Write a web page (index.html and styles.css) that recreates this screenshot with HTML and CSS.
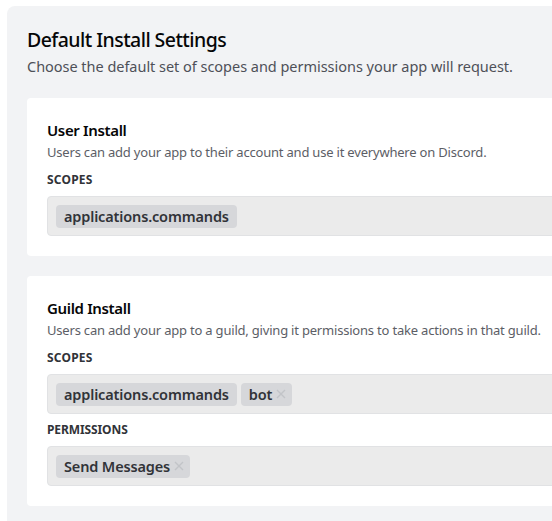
FILE: index.html
```html
<!DOCTYPE html>
<html>
<head>
<meta charset="utf-8">
<link rel="stylesheet" href="styles.css">
</head>
<body>
<div class="panel">
  <h2 class="title">Default Install Settings</h2>
  <p class="subtitle">Choose the default set of scopes and permissions your app will request.</p>

  <section class="card">
    <h3 class="card-title">User Install</h3>
    <p class="card-desc">Users can add your app to their account and use it everywhere on Discord.</p>
    <div class="label">SCOPES</div>
    <div class="select">
      <span class="chip">applications.commands</span>
    </div>
  </section>

  <section class="card">
    <h3 class="card-title">Guild Install</h3>
    <p class="card-desc">Users can add your app to a guild, giving it permissions to take actions in that guild.</p>
    <div class="label">SCOPES</div>
    <div class="select">
      <span class="chip">applications.commands</span>
      <span class="chip">bot<svg class="x" viewBox="0 0 12 12" width="12" height="12"><path d="M2 2 L10 10 M10 2 L2 10" stroke="currentColor" stroke-width="1.4" fill="none"/></svg></span>
    </div>
    <div class="label label-gap">PERMISSIONS</div>
    <div class="select">
      <span class="chip">Send Messages<svg class="x" viewBox="0 0 12 12" width="12" height="12"><path d="M2 2 L10 10 M10 2 L2 10" stroke="currentColor" stroke-width="1.4" fill="none"/></svg></span>
    </div>
  </section>
</div>
</body>
</html>
```

FILE: styles.css
```css
html, body {
  margin: 0;
  padding: 0;
  background: #ffffff;
  overflow: hidden;
}
body {
  width: 552px;
  height: 521px;
  font-family: "Noto Sans", "Open Sans", sans-serif;
  color: #313338;
}
.panel {
  margin: 6px 0 0 7px;
  width: 680px;
  background: #f2f3f5;
  border-radius: 8px;
  padding: 22px 20px 30px 20px;
  box-sizing: border-box;
}
.title {
  margin: 0;
  font-size: 19.5px;
  line-height: 24px;
  font-weight: 500;
  letter-spacing: -0.55px;
  color: #060607;
}
.subtitle {
  margin: 4px 0 0 0;
  font-size: 14.5px;
  line-height: 20px;
  letter-spacing: -0.03px;
  color: #4e5058;
}
.card {
  background: #ffffff;
  border-radius: 4px;
  padding: 22px 20px 20px 20px;
  margin-top: 22px;
}
.card + .card {
  margin-top: 20px;
}
.card-title {
  margin: 0;
  font-size: 15px;
  line-height: 20px;
  font-weight: 600;
  letter-spacing: -0.35px;
  color: #060607;
}
.card-desc {
  margin: 3px 0 0 0;
  font-size: 13px;
  line-height: 18px;
  letter-spacing: -0.2px;
  color: #5c5e66;
}
.label {
  margin-top: 11px;
  font-size: 12px;
  line-height: 16px;
  font-weight: 700;
  letter-spacing: 0.2px;
  color: #313338;
}
.label-gap {
  margin-top: 8px;
  letter-spacing: -0.1px;
}
.select {
  margin-top: 8px;
  height: 40px;
  box-sizing: border-box;
  background: #ebebeb;
  border: 1px solid #e1e2e4;
  border-radius: 4px;
  padding: 0 8px;
  display: flex;
  align-items: center;
  gap: 4px;
}
.chip {
  display: inline-flex;
  align-items: center;
  height: 23px;
  padding: 0 8px;
  background: #d6d7da;
  border-radius: 4px;
  font-size: 14.5px;
  font-weight: 600;
  letter-spacing: -0.15px;
  color: #313338;
}
.x {
  margin-left: 3px;
  margin-right: -3px;
  color: #c2c4c8;
}
```
